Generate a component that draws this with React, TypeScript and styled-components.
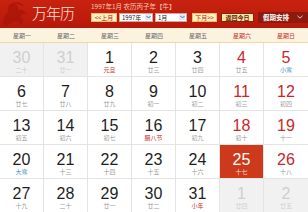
import React from "react";
import styled, { createGlobalStyle } from "styled-components";

const Global = createGlobalStyle`
  html, body { margin: 0; padding: 0; background: #fff; }
  body { font-family: "Liberation Sans", "Noto Sans CJK SC", sans-serif; }
  * { box-sizing: border-box; }
`;

const Page = styled.div`
  width: 308px;
  height: 212px;
  overflow: hidden;
  background: #fff;
`;

const Header = styled.div`
  height: 28px;
  display: flex;
  background: linear-gradient(180deg, #c7230f 0%, #c01c0c 60%, #b5180b 100%);
  position: relative;
`;

const Logo = styled.div`
  width: 90px;
  display: flex;
  align-items: center;
  position: relative;
`;

const Dragon = styled.svg`
  position: absolute;
  left: 0;
  top: 0;
`;

const LogoText = styled.div`
  margin-left: 32px;
  font-family: "Noto Sans CJK SC", sans-serif;
  font-weight: 300;
  font-size: 15px;
  letter-spacing: -1px;
  color: #fbe4dc;
  position: relative;
  line-height: 1;
  margin-top: -4px;
`;

const Controls = styled.div`
  flex: 1;
  display: flex;
  flex-direction: column;
  padding-top: 2px;
`;

const InfoLine = styled.div`
  font-family: "Noto Sans CJK SC", sans-serif;
  font-size: 6.5px;
  line-height: 8px;
  color: #f6c9b6;
  padding-left: 1px;
  height: 9px;
`;

const ControlRow = styled.div`
  display: flex;
  align-items: center;
  height: 10px;
  margin-top: 1px;
`;

const NavButton = styled.div<{ $w: number; $ml?: number }>`
  width: ${(p) => p.$w}px;
  margin-left: ${(p) => p.$ml ?? 0}px;
  height: 9px;
  background: #fdf0c2;
  border: 1px solid #e9c06d;
  color: #c0140c;
  font-family: "Noto Sans CJK SC", sans-serif;
  font-size: 6px;
  line-height: 7px;
  text-align: center;
  white-space: nowrap;
`;

const TodayButton = styled(NavButton)`
  background: #fde7a3;
  border: 1px solid #7a2a10;
  color: #6a1a08;
  font-weight: 700;
`;

const Select = styled.div<{ $w: number; $ml?: number }>`
  width: ${(p) => p.$w}px;
  margin-left: ${(p) => p.$ml ?? 0}px;
  height: 9px;
  background: #fff;
  border: 1px solid #d7a89a;
  display: flex;
  align-items: center;
  justify-content: space-between;
  padding: 0 1px 0 2px;
  font-family: "Noto Sans CJK SC", sans-serif;
  font-size: 6px;
  color: #222;
  line-height: 7px;
`;

const Arrow = styled.span`
  width: 6px;
  height: 6px;
  border-radius: 1px;
  background: #dfe8f6;
  display: flex;
  align-items: center;
  justify-content: center;
`;

const Holiday = styled.div`
  margin-left: 4px;
  flex: 1;
  height: 11px;
  background: #8c1a0e;
  color: #fff;
  font-family: "Noto Sans CJK SC", sans-serif;
  font-size: 6.5px;
  font-weight: 700;
  display: flex;
  align-items: center;
  justify-content: space-between;
  padding: 0 5px 0 5px;
`;

const Weekdays = styled.div`
  display: grid;
  grid-template-columns: repeat(7, 44px);
  height: 15px;
  background: #fcf3df;
  border-bottom: 1px solid #f0d8a8;
`;

const Weekday = styled.div<{ $red?: boolean }>`
  display: flex;
  align-items: center;
  justify-content: center;
  font-family: "Noto Sans CJK SC", sans-serif;
  font-size: 6px;
  color: ${(p) => (p.$red ? "#c8322a" : "#6a6a6a")};
`;

const Grid = styled.div`
  display: grid;
  grid-template-columns: repeat(7, 44px);
  grid-auto-rows: 34px;
`;

const Cell = styled.div<{ $kind: "out" | "today" | "normal" }>`
  border-right: 1px solid #e4e4e4;
  border-bottom: 1px solid #e4e4e4;
  background: ${(p) =>
    p.$kind === "out" ? "#f1f1f1" : p.$kind === "today" ? "#cd3a1b" : "#fff"};
  display: flex;
  flex-direction: column;
  align-items: center;
  padding-top: 7px;
  &:nth-child(7n) { border-right: none; }
`;

const Num = styled.div<{ $color: string }>`
  font-family: "Liberation Sans", sans-serif;
  font-size: 16px;
  line-height: 15px;
  color: ${(p) => p.$color};
`;

const Lunar = styled.div<{ $color: string }>`
  font-family: "Noto Sans CJK SC", sans-serif;
  font-size: 6px;
  line-height: 7px;
  margin-top: 1px;
  color: ${(p) => p.$color};
`;

type Day = { n: number; l: string; out?: boolean; fest?: "red" | "blue" };

const days: Day[] = [
  { n: 30, l: "二十", out: true },
  { n: 31, l: "廿一", out: true },
  { n: 1, l: "元旦", fest: "red" },
  { n: 2, l: "廿三" },
  { n: 3, l: "廿四" },
  { n: 4, l: "廿五" },
  { n: 5, l: "小寒", fest: "blue" },
  { n: 6, l: "廿七" },
  { n: 7, l: "廿八" },
  { n: 8, l: "廿九" },
  { n: 9, l: "初一" },
  { n: 10, l: "初二" },
  { n: 11, l: "初三" },
  { n: 12, l: "初四" },
  { n: 13, l: "初五" },
  { n: 14, l: "初六" },
  { n: 15, l: "初七" },
  { n: 16, l: "腊八节", fest: "red" },
  { n: 17, l: "初九" },
  { n: 18, l: "初十" },
  { n: 19, l: "十一" },
  { n: 20, l: "大寒", fest: "blue" },
  { n: 21, l: "十三" },
  { n: 22, l: "十四" },
  { n: 23, l: "十五" },
  { n: 24, l: "十六" },
  { n: 25, l: "十七" },
  { n: 26, l: "十八" },
  { n: 27, l: "十九" },
  { n: 28, l: "二十" },
  { n: 29, l: "廿一" },
  { n: 30, l: "廿二" },
  { n: 31, l: "小年", fest: "red" },
  { n: 1, l: "廿四", out: true },
  { n: 2, l: "廿五", out: true },
];

const weekNames = ["星期一", "星期二", "星期三", "星期四", "星期五", "星期六", "星期日"];

const ArrowIcon = () => (
  <Arrow>
    <svg width="5" height="4" viewBox="0 0 5 4">
      <path d="M0.5 1 L2.5 3 L4.5 1" stroke="#3b6fc6" strokeWidth="1" fill="none" />
    </svg>
  </Arrow>
);

export default function App() {
  return (
    <Page>
      <Global />
      <Header>
        <Logo>
          <Dragon width="34" height="28" viewBox="0 0 34 28">
            <path
              d="M4 26 C2 20 4 14 9 12 C6 9 8 4 13 4 C17 4 19 7 18 10 C22 9 26 11 27 15 C24 13 21 14 20 17 C23 18 24 22 21 25 C19 21 15 20 12 22 C10 24 7 26 4 26 Z"
              fill="#a8140a"
              opacity="0.75"
            />
            <path d="M10 6 C13 2 20 2 23 6" stroke="#a8140a" strokeWidth="2" fill="none" opacity="0.6" />
          </Dragon>
          <LogoText>万年历</LogoText>
        </Logo>
        <Controls>
          <InfoLine>1997年1月 农历丙子年【牛】</InfoLine>
          <ControlRow>
            <NavButton $w={26} $ml={1}>&lt;&lt;上月</NavButton>
            <Select $w={34} $ml={2}>
              <span>1997年</span>
              <ArrowIcon />
            </Select>
            <Select $w={32} $ml={2}>
              <span>1月</span>
              <ArrowIcon />
            </Select>
            <NavButton $w={25} $ml={5}>下月&gt;&gt;</NavButton>
            <TodayButton $w={33} $ml={4}>返回今日</TodayButton>
            <Holiday>
              <span>假期安排</span>
              <svg width="6" height="4" viewBox="0 0 6 4">
                <path d="M0.5 0.8 L3 3.2 L5.5 0.8" stroke="#e9c9c0" strokeWidth="1" fill="none" />
              </svg>
            </Holiday>
          </ControlRow>
        </Controls>
      </Header>
      <Weekdays>
        {weekNames.map((w, i) => (
          <Weekday key={w} $red={i >= 5}>
            {w}
          </Weekday>
        ))}
      </Weekdays>
      <Grid>
        {days.map((d, i) => {
          const col = i % 7;
          const today = !d.out && d.n === 25;
          const kind = d.out ? "out" : today ? "today" : "normal";
          const numColor = d.out ? "#cfcfcf" : today ? "#fff" : col >= 5 ? "#c8282a" : "#1e1e1e";
          const lunarColor = d.out
            ? "#cfcfcf"
            : today
            ? "#f8d8cf"
            : d.fest === "red"
            ? "#c0302a"
            : d.fest === "blue"
            ? "#3a8cbf"
            : "#9a9a9a";
          return (
            <Cell key={i} $kind={kind}>
              <Num $color={numColor}>{d.n}</Num>
              <Lunar $color={lunarColor}>{d.l}</Lunar>
            </Cell>
          );
        })}
      </Grid>
    </Page>
  );
}
